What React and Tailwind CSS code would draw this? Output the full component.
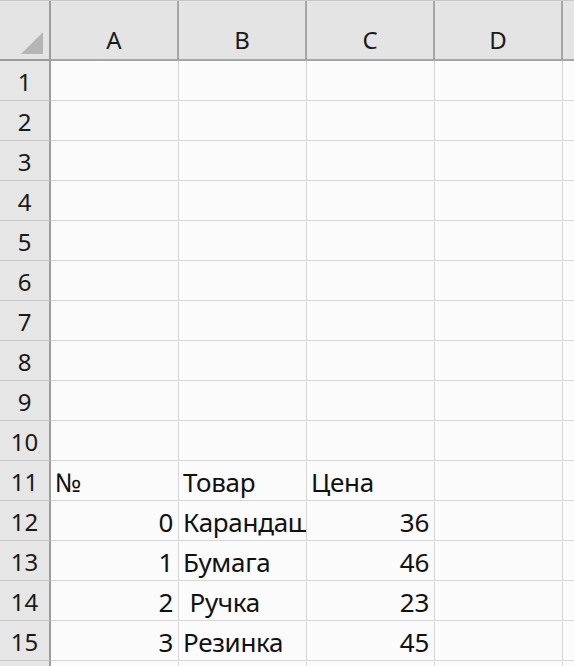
import React from 'react';

const cols = ['A', 'B', 'C', 'D'];

const data = {
  11: ['№', 'Товар', 'Цена', ''],
  12: ['0', 'Карандаш', '36', ''],
  13: ['1', 'Бумага', '46', ''],
  14: ['2', ' Ручка', '23', ''],
  15: ['3', 'Резинка', '45', ''],
};

const isNum = (v) => /^\d+$/.test(v);

const Cell = ({ value, clip }) => (
  <div
    className={`relative h-full w-[128px] shrink-0 border-r border-b border-[#d6d6d6] bg-[#fbfbfb] ${
      clip ? 'overflow-hidden' : 'overflow-visible'
    }`}
  >
    {value && (
      <span
        className={`absolute bottom-[5px] whitespace-pre text-[26px] leading-none tracking-[-0.3px] text-[#111] ${
          isNum(value) ? 'right-[5px]' : 'left-[4px]'
        }`}
      >
        {value}
      </span>
    )}
  </div>
);

const App = () => {
  const rows = Array.from({ length: 15 }, (_, i) => i + 1);

  return (
    <div className="w-[574px] h-[666px] overflow-hidden bg-[#fbfbfb] font-['Noto_Sans',sans-serif]">
      {/* column header */}
      <div className="flex h-[61px] bg-[#e4e4e4] border-t border-[#c8c8c8]">
        <div className="relative w-[51px] shrink-0 border-r-2 border-b-2 border-[#9c9c9c]">
          <svg className="absolute left-[21px] top-[31px]" width="22" height="22" viewBox="0 0 22 22">
            <polygon points="22,0 22,22 0,22" fill="#b5b5b5" />
          </svg>
        </div>
        {cols.map((c) => (
          <div
            key={c}
            className="w-[128px] shrink-0 flex items-end justify-center pb-[7px] border-r-2 border-b-2 border-[#a5a5a5] text-[24px] leading-none text-[#1a1a1a]"
          >
            {c}
          </div>
        ))}
        <div className="flex-1 border-b-2 border-[#a5a5a5]" />
      </div>

      {rows.map((r) => {
        const vals = data[r] || ['', '', '', ''];
        return (
          <div key={r} className="flex h-[40px]">
            <div className="w-[51px] shrink-0 flex items-end justify-center pb-[6px] bg-[#e6e6e6] border-r-2 border-b border-[#9c9c9c] border-b-[#c9c9c9] text-[24px] text-[#1a1a1a] leading-none">
              {r}
            </div>
            {vals.map((v, i) => (
              <Cell key={i} value={v} clip={i === 1} />
            ))}
            <div className="flex-1 border-b border-[#d6d6d6]" />
          </div>
        );
      })}

      <div className="flex h-[40px]">
        <div className="w-[51px] shrink-0 bg-[#e6e6e6] border-r-2 border-[#9c9c9c]" />
        {cols.map((c) => (
          <div key={c} className="w-[128px] shrink-0 border-r border-[#d6d6d6]" />
        ))}
      </div>
    </div>
  );
};

export default App;
